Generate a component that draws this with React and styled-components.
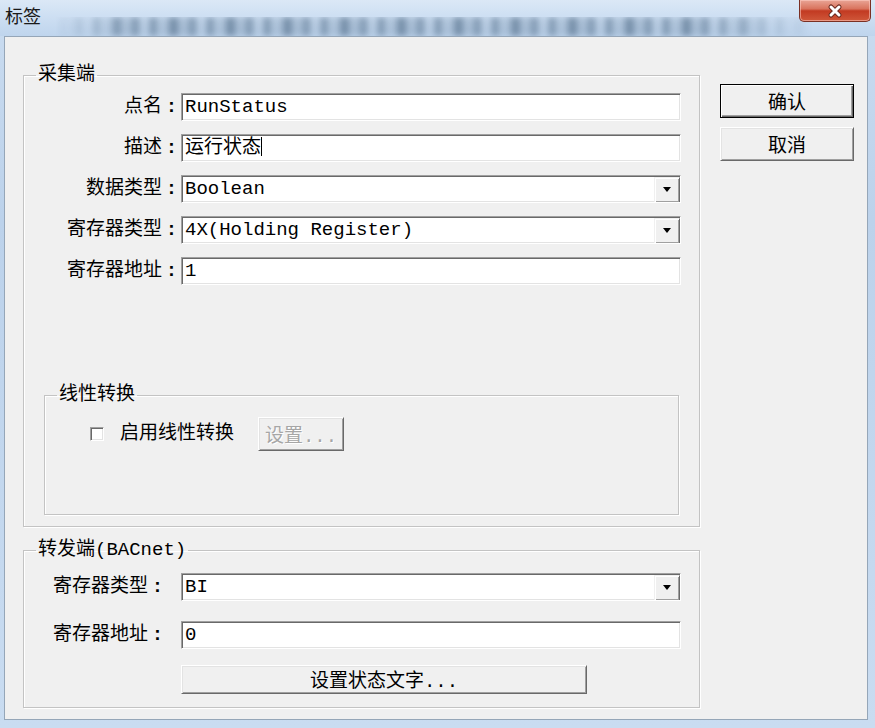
import React from 'react';
import styled, { createGlobalStyle } from 'styled-components';

const Global = createGlobalStyle`
  html, body { margin: 0; padding: 0; }
  body {
    font-family: "Liberation Mono", "Noto Sans CJK SC", monospace;
    font-size: 19px;
    color: #000;
  }
`;

const Window = styled.div`
  width: 875px;
  height: 728px;
  display: flex;
  flex-direction: column;
  background: linear-gradient(180deg, #cadcf0 0%, #bcd2eb 30%, #c9dcf1 100%);
  overflow: hidden;
`;

const TitleBar = styled.div`
  position: relative;
  height: 36px;
  flex: none;
  display: flex;
  justify-content: space-between;
  align-items: flex-start;
  padding: 0 4px 0 5px;
  background: linear-gradient(180deg, #dbe8f6 0%, #cfe0f3 40%, #bfd5ed 100%);

  &::before {
    content: '';
    position: absolute;
    left: 55px;
    right: 60px;
    top: 17px;
    height: 19px;
    background:
      repeating-linear-gradient(90deg,
        rgba(45, 75, 105, 0.8) 0 9px,
        rgba(45, 75, 105, 0.3) 9px 20px,
        rgba(45, 75, 105, 0.7) 20px 27px,
        rgba(45, 75, 105, 0.15) 27px 38px,
        rgba(45, 75, 105, 0.75) 38px 44px,
        rgba(45, 75, 105, 0.25) 44px 57px);
    -webkit-mask-image: linear-gradient(90deg, transparent 0, #000 10%, #000 85%, transparent 100%);
    mask-image: linear-gradient(90deg, transparent 0, #000 10%, #000 85%, transparent 100%);
    filter: blur(3px);
    opacity: 0.65;
  }
`;

const Title = styled.span`
  position: relative;
  font-family: "Noto Sans CJK SC", sans-serif;
  font-size: 18px;
  line-height: 24px;
  margin-top: 3px;
  color: #1a1a1a;
`;

const CloseButton = styled.div`
  position: relative;
  width: 72px;
  height: 22px;
  box-sizing: border-box;
  display: flex;
  align-items: center;
  justify-content: center;
  border: 1px solid #7a3024;
  border-top: none;
  border-radius: 0 0 5px 5px;
  background: linear-gradient(180deg, #e9a596 0%, #d9735d 42%, #c23a22 52%, #d0583a 100%);
  box-shadow: inset 0 0 0 1px rgba(255, 210, 200, 0.55);
`;

const Body = styled.div`
  flex: 1;
  margin: 0 7px 8px 4px;
  border: 1px solid #95a6b8;
  background: #f0f0f0;
  display: flex;
  gap: 20px;
  padding: 27px 12px 11px 18px;
  min-height: 0;
`;

const LeftColumn = styled.div`
  width: 677px;
  display: flex;
  flex-direction: column;
  gap: 12px;
`;

const RightColumn = styled.div`
  width: 134px;
  display: flex;
  flex-direction: column;
  gap: 9px;
  padding-top: 20px;
`;

const Group = styled.fieldset`
  min-width: 0;
  border: 1px solid #c3c3c3;
  box-shadow: inset 1px 1px 0 #fff, 1px 1px 0 #fff;
  padding: ${p => p.$pad};
  display: flex;
  flex-direction: column;
  flex: ${p => (p.$grow ? 1 : 'none')};
  margin: ${p => p.$margin || 0};
`;

const Legend = styled.legend`
  font-size: 19px;
  line-height: 22px;
  padding: 0 2px;
  margin-left: 12px;
`;

const Rows = styled.div`
  display: grid;
  grid-template-columns: ${p => p.$label}px 1fr;
  grid-auto-rows: 28px;
  row-gap: ${p => p.$gap}px;
  padding: 0 18px 0 ${p => p.$indent}px;
  margin-top: ${p => p.$top || 0}px;
  align-items: center;
`;

const Label = styled.span`
  text-align: ${p => p.$align};
  line-height: 28px;
  white-space: nowrap;
`;

const Colon = styled.span`
  display: inline-block;
  width: 19px;
  text-align: center;
  font-weight: bold;
`;

const Field = styled.div`
  height: 28px;
  box-sizing: border-box;
  display: flex;
  align-items: center;
  background: #fff;
  border: 1px solid;
  border-color: #a0a0a0 #fff #fff #a0a0a0;
  box-shadow: inset 1px 1px 0 #696969, inset -1px -1px 0 #e3e3e3;
  padding: 0 0 0 3px;
  font-size: 19px;
  white-space: nowrap;
  overflow: hidden;
`;

const Value = styled.span`
  flex: 1;
  line-height: 26px;
`;

const Caret = styled.span`
  display: inline-block;
  width: 1px;
  height: 19px;
  background: #000;
  vertical-align: -3px;
`;

const DropButton = styled.div`
  width: 26px;
  height: 26px;
  margin-top: 1px;
  box-sizing: border-box;
  display: flex;
  align-items: center;
  justify-content: center;
  background: #f0f0f0;
  border: 1px solid;
  border-color: #f0f0f0 #696969 #696969 #f0f0f0;
  box-shadow: inset 1px 1px 0 #fff, inset -1px -1px 0 #a0a0a0;
`;

const Arrow = styled.span`
  width: 0;
  height: 0;
  border-left: 4px solid transparent;
  border-right: 4px solid transparent;
  border-top: 5px solid #000;
`;

const Button = styled.div`
  height: ${p => p.$h}px;
  width: ${p => (p.$w ? `${p.$w}px` : 'auto')};
  box-sizing: border-box;
  display: flex;
  align-items: center;
  justify-content: center;
  background: #f0f0f0;
  font-size: 19px;
  color: ${p => (p.$disabled ? '#a6a6a6' : '#000')};
  text-shadow: ${p => (p.$disabled ? '1px 1px 0 #fff' : 'none')};
  border: 1px solid;
  border-color: ${p => (p.$default ? '#000' : '#fff #696969 #696969 #fff')};
  box-shadow: ${p =>
    p.$default
      ? 'inset 1px 1px 0 #fff, inset -1px -1px 0 #696969, inset -2px -2px 0 #a0a0a0'
      : 'inset 1px 1px 0 #e3e3e3, inset -1px -1px 0 #a0a0a0'};
  white-space: nowrap;
`;

const Stretch = styled.div`
  flex: 1;
`;

const CheckRow = styled.div`
  display: flex;
  align-items: center;
  margin-left: 45px;
`;

const CheckBox = styled.span`
  width: 14px;
  height: 14px;
  box-sizing: border-box;
  background: #fff;
  border: 1px solid;
  border-color: #a0a0a0 #fff #fff #a0a0a0;
  box-shadow: inset 1px 1px 0 #696969, inset -1px -1px 0 #e3e3e3;
  margin-right: 16px;
`;

const CheckLabel = styled.span`
  margin-right: 24px;
  line-height: 24px;
`;

const ButtonCell = styled.div`
  grid-column: 2;
`;

function Combo({ value }) {
  return (
    <Field>
      <Value>{value}</Value>
      <DropButton>
        <Arrow />
      </DropButton>
    </Field>
  );
}

function CloseIcon() {
  return (
    <svg width="18" height="16" viewBox="0 0 18 16">
      <path d="M5 4 L13 12 M13 4 L5 12" stroke="#6b2a20" strokeWidth="5" strokeLinecap="round" fill="none" />
      <path d="M5 4 L13 12 M13 4 L5 12" stroke="#fff" strokeWidth="3" strokeLinecap="round" fill="none" />
    </svg>
  );
}

export default function App() {
  return (
    <>
      <Global />
      <Window>
        <TitleBar>
          <Title>标签</Title>
          <CloseButton>
            <CloseIcon />
          </CloseButton>
        </TitleBar>
        <Body>
          <LeftColumn>
            <Group $grow $pad="7px 0 0 0">
              <Legend>采集端</Legend>
              <Rows $label={157} $gap={13} $indent={0}>
                <Label $align="right">点名<Colon>:</Colon></Label>
                <Field><Value>RunStatus</Value></Field>
                <Label $align="right">描述<Colon>:</Colon></Label>
                <Field><Value>运行状态<Caret /></Value></Field>
                <Label $align="right">数据类型<Colon>:</Colon></Label>
                <Combo value="Boolean" />
                <Label $align="right">寄存器类型<Colon>:</Colon></Label>
                <Combo value="4X(Holding Register)" />
                <Label $align="right">寄存器地址<Colon>:</Colon></Label>
                <Field><Value>1</Value></Field>
              </Rows>
              <Stretch />
              <Group $pad="11px 0 63px 0" $margin="0 20px 11px 20px">
                <Legend>线性转换</Legend>
                <CheckRow>
                  <CheckBox />
                  <CheckLabel>启用线性转换</CheckLabel>
                  <Button $h={34} $w={86} $disabled>设置...</Button>
                </CheckRow>
              </Group>
            </Group>
            <Group $pad="12px 0 14px 0">
              <Legend>转发端(BACnet)</Legend>
              <Rows $label={128} $gap={20} $indent={29}>
                <Label $align="left">寄存器类型<Colon>:</Colon></Label>
                <Combo value="BI" />
                <Label $align="left">寄存器地址<Colon>:</Colon></Label>
                <Field><Value>0</Value></Field>
              </Rows>
              <Rows $label={128} $gap={0} $indent={29} $top={16}>
                <ButtonCell>
                  <Button $h={29} $w={406}>设置状态文字...</Button>
                </ButtonCell>
              </Rows>
            </Group>
          </LeftColumn>
          <RightColumn>
            <Button $h={34} $default>确认</Button>
            <Button $h={34}>取消</Button>
          </RightColumn>
        </Body>
      </Window>
    </>
  );
}
